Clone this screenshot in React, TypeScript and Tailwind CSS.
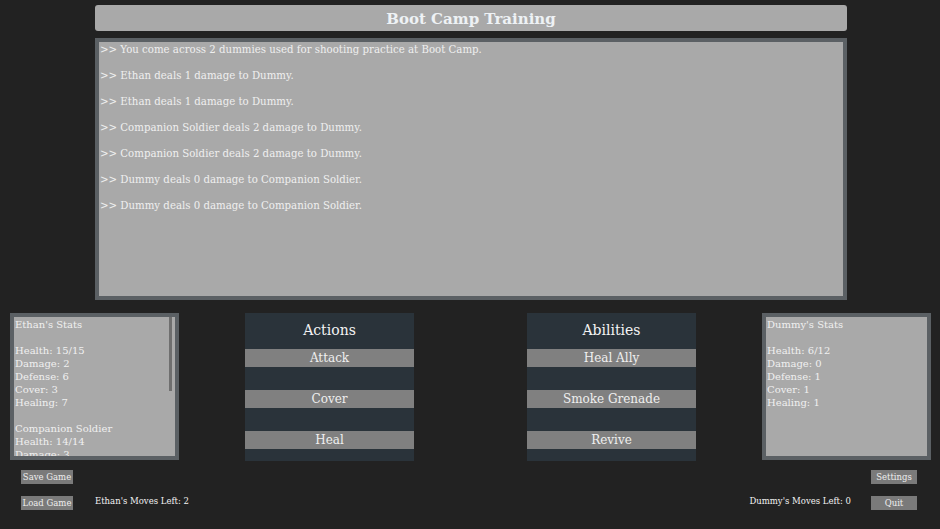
import React from 'react';

const logLines = [
  'You come across 2 dummies used for shooting practice at Boot Camp.',
  'Ethan deals 1 damage to Dummy.',
  'Ethan deals 1 damage to Dummy.',
  'Companion Soldier deals 2 damage to Dummy.',
  'Companion Soldier deals 2 damage to Dummy.',
  'Dummy deals 0 damage to Companion Soldier.',
  'Dummy deals 0 damage to Companion Soldier.',
];

const ethanStats = [
  "Ethan's Stats",
  '',
  'Health: 15/15',
  'Damage: 2',
  'Defense: 6',
  'Cover: 3',
  'Healing: 7',
  '',
  'Companion Soldier',
  'Health: 14/14',
  'Damage: 3',
  'Defense: 4',
];

const dummyStats = ["Dummy's Stats", '', 'Health: 6/12', 'Damage: 0', 'Defense: 1', 'Cover: 1', 'Healing: 1'];

const font = "font-['DejaVu_Serif',serif]";

function StatsBox({ lines, scroll }: { lines: string[]; scroll?: boolean }) {
  return (
    <div className="relative w-[169px] h-[147px] border-4 border-[#5b6064] bg-[#a9a9a9] overflow-hidden">
      <div className="pl-[1px] pt-[1px] text-[10px] leading-[13px] text-[#f0f0f0]">
        {lines.map((l, i) => (
          <div key={i} className="h-[13px] whitespace-nowrap">{l}</div>
        ))}
      </div>
      {scroll && <div className="absolute right-[3px] top-0 w-[3px] h-[74px] bg-[#6f6f6f]" />}
    </div>
  );
}

function Panel({ title, items }: { title: string; items: string[] }) {
  return (
    <div className="w-[169px] h-[148px] bg-[#2a333a] flex flex-col">
      <div className="h-[36px] pb-[1px] flex items-center justify-center text-[14px] text-[#f4f4f4]">{title}</div>
      <div className="flex flex-col gap-[23px]">
        {items.map(it => (
          <button key={it} className="h-[18px] bg-[#808080] text-[12px] leading-[18px] text-[#efefef] text-center">
            {it}
          </button>
        ))}
      </div>
    </div>
  );
}

function SmallButton({ label, w }: { label: string; w: string }) {
  return (
    <button className={`${w} h-[14px] bg-[#7a7a7a] text-[8.5px] leading-[14px] text-[#eeeeee] text-center whitespace-nowrap overflow-visible`}>
      {label}
    </button>
  );
}

export default function App() {
  return (
    <div className={`w-[940px] h-[529px] bg-[#222222] overflow-hidden flex flex-col ${font}`}>
      <div className="ml-[95px] mt-[5px] w-[752px] h-[26px] rounded-[3px] bg-[#a9a9a9] flex items-center justify-center">
        <h1 className="text-[15px] leading-[20px] pt-[1px] font-bold text-[#eef2f5]">Boot Camp Training</h1>
      </div>

      <div className="ml-[95px] mt-[7px] w-[752px] h-[262px] border-4 border-[#5b6064] bg-[#a9a9a9] pl-[1px] pt-[1px] text-[10.2px] text-[#efefef]">
        {logLines.map((l, i) => (
          <p key={i} className="h-[26px] leading-[13px] whitespace-nowrap">&gt;&gt; {l}</p>
        ))}
      </div>

      <div className="mt-[13px] ml-[10px] flex items-start">
        <StatsBox lines={ethanStats} scroll />
        <div className="ml-[66px]">
          <Panel title="Actions" items={['Attack', 'Cover', 'Heal']} />
        </div>
        <div className="ml-[113px]">
          <Panel title="Abilities" items={['Heal Ally', 'Smoke Grenade', 'Revive']} />
        </div>
        <div className="ml-[66px]">
          <StatsBox lines={dummyStats} />
        </div>
      </div>

      <div className="mt-[9px] flex justify-between">
        <div className="ml-[21px] flex flex-col gap-[12px]">
          <SmallButton label="Save Game" w="w-[52px]" />
          <div className="flex items-center">
            <SmallButton label="Load Game" w="w-[52px]" />
            <span className="ml-[22px] -mt-[4px] text-[8.5px] text-[#f2f2f2] whitespace-nowrap">Ethan's Moves Left: 2</span>
          </div>
        </div>
        <div className="mr-[23px] flex flex-col items-end gap-[12px]">
          <SmallButton label="Settings" w="w-[46px]" />
          <div className="flex items-center">
            <span className="mr-[20px] -mt-[4px] text-[8.5px] text-[#f2f2f2] whitespace-nowrap">Dummy's Moves Left: 0</span>
            <SmallButton label="Quit" w="w-[46px]" />
          </div>
        </div>
      </div>
    </div>
  );
}
